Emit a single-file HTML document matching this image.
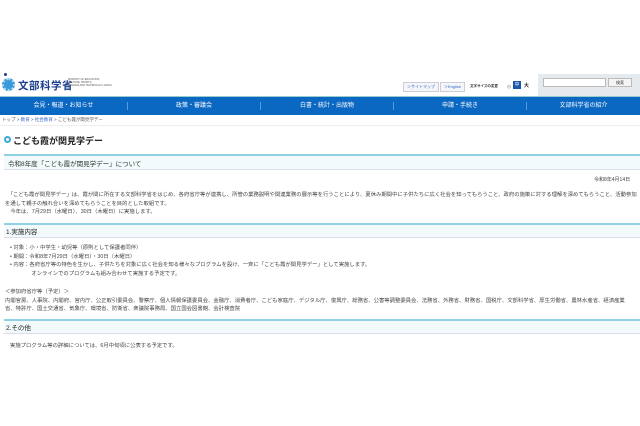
<!DOCTYPE html>
<html><head><meta charset="utf-8"><style>
*{margin:0;padding:0;box-sizing:border-box}
body{width:640px;height:426px;background:#fff;font-family:"Liberation Sans","Noto Sans CJK JP",sans-serif;color:#333;position:relative;overflow:hidden}
.a{position:absolute;white-space:nowrap}
.s{font-size:5.35px;color:#444}
</style></head><body>
<div class="a" style="left:0;top:96px;width:640px;height:1px;background:#9cc"></div>
<div class="a" style="left:4px;top:73px;width:3px;height:3px;border-radius:50%;background:#1a3f8f"></div>
<div class="a" style="left:2px;top:78px;width:13px;height:13px;border-radius:50%;background:#3a9ad9;border:2px dotted #a8d8f0"></div>
<div class="a" style="left:18px;top:78px;font-size:10.5px;font-weight:bold;color:#1a3f8f;letter-spacing:0.5px">文部科学省</div>
<div class="a" style="left:68px;top:78px;font-size:2.5px;line-height:3px;color:#555">MINISTRY OF EDUCATION,<br>CULTURE, SPORTS,<br>SCIENCE AND TECHNOLOGY-JAPAN</div>
<div class="a" style="left:403px;top:82px;border:1px solid #ccd;padding:1px 3px;font-size:4px;color:#36c;background:#f4f6f8">＞サイトマップ</div>
<div class="a" style="left:440px;top:82px;border:1px solid #ccd;padding:1px 3px;font-size:4px;color:#36c;background:#f4f6f8">＞English</div>
<div class="a" style="left:470px;top:84px;font-size:3.5px;font-weight:bold;color:#333">文字サイズの変更</div>
<div class="a" style="left:507px;top:84px;font-size:4px">小</div>
<div class="a" style="left:513px;top:81px;width:8px;height:8px;background:#1a56a8;color:#fff;font-size:5px;text-align:center;line-height:8px">中</div>
<div class="a" style="left:524px;top:82px;font-size:5px;font-weight:bold">大</div>
<div class="a" style="left:538px;top:74px;width:102px;height:22px;background:#e4eaee"></div>
<div class="a" style="left:543px;top:78px;width:63px;height:9px;background:#fff;border:1px solid #bbb"></div>
<div class="a" style="left:608px;top:78px;width:24px;height:9px;background:#f4f4f4;border:1px solid #bbb;font-size:4px;text-align:center;line-height:7px">検索</div>
<div class="a" style="left:0;top:97px;width:640px;height:18px;background:#0a67c2;color:#fff;font-size:6px;display:flex;align-items:center;line-height:8px">
<div style="width:128px;text-align:center;border-right:1px solid #5a9ae0">会見・報道・お知らせ</div>
<div style="width:133px;text-align:center;border-right:1px solid #5a9ae0">政策・審議会</div>
<div style="width:133px;text-align:center;border-right:1px solid #5a9ae0">白書・統計・出版物</div>
<div style="width:133px;text-align:center;border-right:1px solid #5a9ae0">申請・手続き</div>
<div style="flex:1;text-align:center">文部科学省の紹介</div></div>
<div class="a" style="left:0;top:115px;width:640px;height:11px;border-bottom:1px solid #eee"></div>
<div class="a" style="left:2px;top:117px;font-size:4.5px;color:#555">トップ &gt; <span style="color:#36c">教育</span> &gt; <span style="color:#36c">社会教育</span> &gt; こども霞が関見学デー</div>
<div class="a" style="left:4px;top:136px;width:7px;height:7px;border-radius:50%;border:2px solid #3aa8d8;background:#fff"></div>
<div class="a" style="left:13px;top:134px;font-size:9px;font-weight:bold;color:#222">こども霞が関見学デー</div>
<div class="a" style="left:4px;top:154px;width:636px;height:16px;background:#f2fafc;border-top:2px solid #8fd0e2;border-bottom:1px solid #dde"></div>
<div class="a" style="left:8px;top:158px;font-size:6.5px;color:#333">令和8年度「こども霞が関見学デー」について</div>
<div class="a s" style="left:594px;top:176px;font-size:5px">令和8年4月14日</div>
<div class="a s" style="left:5px;top:191px;line-height:8.5px">　「こども霞が関見学デー」は、霞が関に所在する文部科学省をはじめ、各府省庁等が連携し、所管の業務説明や関連業務の展示等を行うことにより、夏休み期間中に子供たちに広く社会を知ってもらうこと、政府の施策に対する理解を深めてもらうこと、活動参加<br>を通して親子の触れ合いを深めてもらうことを目的とした取組です。<br>　今年は、7月29日（水曜日）、30日（木曜日）に実施します。</div>
<div class="a" style="left:4px;top:223px;width:636px;height:15px;background:#f2fafc;border-top:2px solid #8fd0e2;border-bottom:1px solid #dde"></div>
<div class="a" style="left:6px;top:226px;font-size:6.5px;color:#222">1.実施内容</div>
<div class="a s" style="left:10px;top:244px;line-height:8.5px">• 対象：小・中学生・幼児等（原則として保護者同伴）<br>• 期間：令和8年7月29日（水曜日）・30日（木曜日）<br>• 内容：各府省庁等の特色を生かし、子供たちを対象に広く社会を知る様々なプログラムを設け、一斉に「こども霞が関見学デー」として実施します。<br>　　　　オンラインでのプログラムも組み合わせて実施する予定です。</div>
<div class="a s" style="left:5px;top:288px;line-height:8.5px">＜参加府省庁等（予定）＞<br>内閣官房、人事院、内閣府、宮内庁、公正取引委員会、警察庁、個人情報保護委員会、金融庁、消費者庁、こども家庭庁、デジタル庁、復興庁、総務省、公害等調整委員会、法務省、外務省、財務省、国税庁、文部科学省、厚生労働省、農林水産省、経済産業<br>省、特許庁、国土交通省、気象庁、環境省、防衛省、衆議院事務局、国立国会図書館、会計検査院</div>
<div class="a" style="left:4px;top:319px;width:636px;height:15px;background:#f2fafc;border-top:2px solid #8fd0e2;border-bottom:1px solid #dde"></div>
<div class="a" style="left:6px;top:322px;font-size:6.5px;color:#222">2.その他</div>
<div class="a s" style="left:10px;top:341px">実施プログラム等の詳細については、6月中旬頃に公表する予定です。</div>
</body></html>
